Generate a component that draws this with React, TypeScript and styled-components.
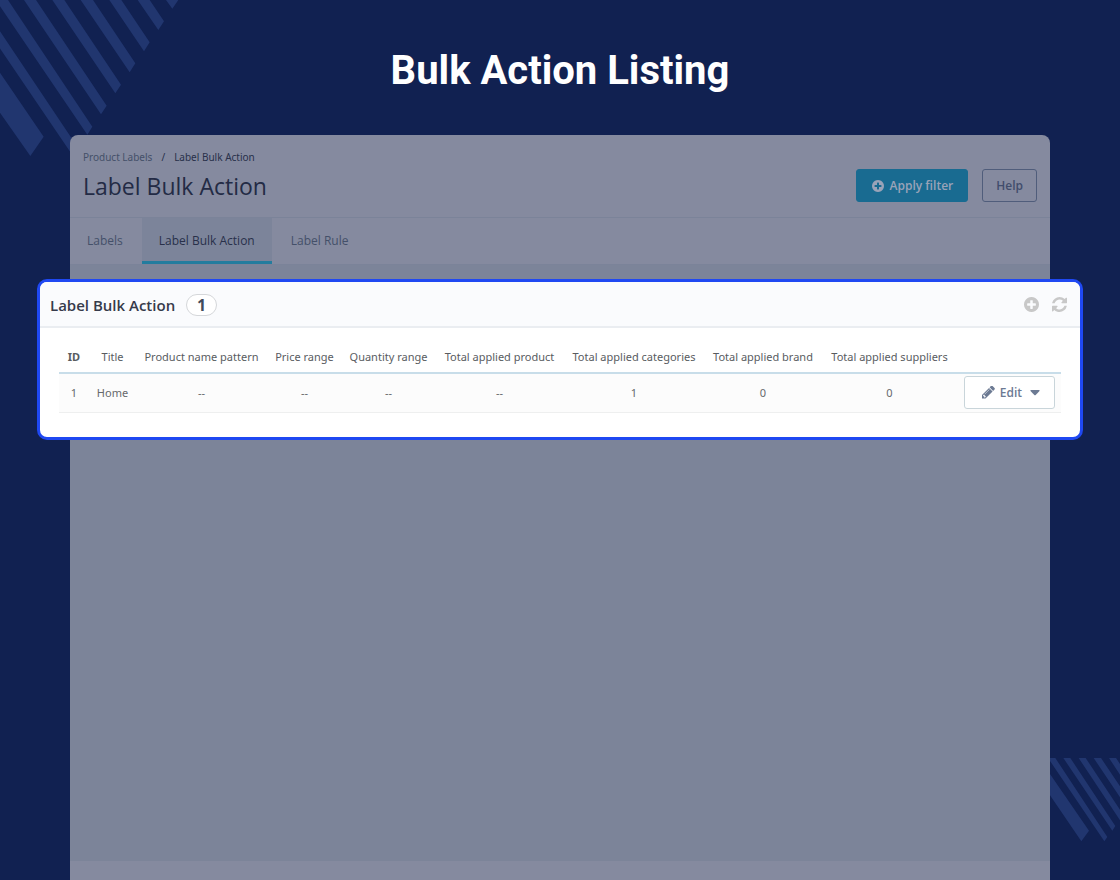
import React from "react";
import styled, { createGlobalStyle } from "styled-components";

const GlobalStyle = createGlobalStyle`
  *, *::before, *::after { box-sizing: border-box; }
  body {
    margin: 0;
    background: #112151;
    font-family: "Open Sans", "Noto Sans", sans-serif;
  }
  button { font-family: inherit; cursor: pointer; }
`;

const Page = styled.main`
  position: relative;
  display: flex;
  flex-direction: column;
  min-height: 100vh;
  padding: 47px 70px 0;
  overflow: hidden;
  background: #112151;
`;

const Stripes = styled.svg<{ $corner: "top" | "bottom" }>`
  position: absolute;
  fill: #21366f;
  ${({ $corner }) => ($corner === "top" ? "top: 0; left: 0;" : "right: 0; bottom: 38px;")}
`;

const PageTitle = styled.h1`
  position: relative;
  margin: 0 0 40px;
  color: #fff;
  font: 700 40px/48px Roboto, sans-serif;
  text-align: center;
`;

const AppWindow = styled.div`
  position: relative;
  display: flex;
  flex: 1;
  flex-direction: column;
  border-radius: 8px 8px 0 0;
  background: #858a9f;
`;

const Header = styled.header`
  display: flex;
  align-items: flex-end;
  justify-content: space-between;
  height: 83px;
  padding: 0 13px 15px;
  border-bottom: 1px solid #7b8399;
`;

const Breadcrumb = styled.nav`
  display: flex;
  gap: 9px;
  margin-bottom: 5px;
  color: #28304a;
  font-family: "Noto Sans", sans-serif;
  font-size: 10px;
  line-height: 16px;
`;

const CrumbLink = styled.a`
  color: #445069;
  text-decoration: none;
`;

const Heading = styled.h2`
  margin: 0;
  color: #232b45;
  font-size: 23px;
  font-weight: 400;
  line-height: 32px;
`;

const Actions = styled.div`
  display: flex;
  gap: 14px;
`;

const ActionButton = styled.button<{ $primary?: boolean }>`
  display: flex;
  align-items: center;
  gap: 6px;
  height: 33px;
  padding: ${({ $primary }) => ($primary ? "0 14px 0 15px" : "0 13px")};
  border: 1px solid ${({ $primary }) => ($primary ? "#196b91" : "#505d7b")};
  border-radius: 3px;
  background: ${({ $primary }) => ($primary ? "#196b91" : "transparent")};
  color: ${({ $primary }) => ($primary ? "#9aa3b8" : "#414d6c")};
  font-size: 12px;
  font-weight: 600;
`;

const Tabs = styled.nav`
  display: flex;
  height: 47px;
  border-bottom: 1px solid #7b8399;
`;

const Tab = styled.a<{ $active?: boolean }>`
  padding: 0 17px;
  border-bottom: 3px solid ${({ $active }) => ($active ? "#237c9e" : "transparent")};
  background: ${({ $active }) => ($active ? "#7c849a" : "transparent")};
  color: ${({ $active }) => ($active ? "#28304a" : "#445069")};
  font-size: 12px;
  line-height: 45px;
  text-decoration: none;

  & + & { margin-left: 2px; }
`;

const Content = styled.div`
  flex: 1;
  margin-bottom: 19px;
  padding-top: 14px;
  background: #7c8499;
`;

const Panel = styled.section`
  margin: 0 -33px;
  border: 3px solid #1f48f2;
  border-radius: 10px;
  background: #fff;
  overflow: hidden;
`;

const PanelHeader = styled.div`
  display: flex;
  align-items: center;
  justify-content: space-between;
  height: 46px;
  padding: 2px 13px 0 10px;
  border-bottom: 2px solid #eaedf1;
  background: #fafbfd;
`;

const PanelTitle = styled.h3`
  display: flex;
  align-items: center;
  gap: 11px;
  margin: 0;
  color: #363a4a;
  font-size: 15px;
  font-weight: 600;
`;

const Count = styled.span`
  width: 31px;
  border: 1px solid #d5d7da;
  border-radius: 11px;
  background: #fff;
  color: #414a5c;
  font-size: 16px;
  font-weight: 700;
  line-height: 20px;
  text-align: center;
`;

const Tools = styled.div`
  display: flex;
  gap: 13px;
  padding-bottom: 2px;
`;

const IconButton = styled.button`
  display: flex;
  padding: 0;
  border: 0;
  background: none;
  color: #c8c8c8;
`;

const TableArea = styled.div`
  padding: 12px 19px 24px;
`;

const Table = styled.table`
  width: 100%;
  border-collapse: collapse;
  table-layout: fixed;
  color: #66696c;
  font-family: "Noto Sans", sans-serif;
  font-size: 11px;
  text-align: center;
`;

const Col = styled.col<{ $width: number }>`
  width: ${({ $width }) => $width}px;
`;

const Th = styled.th<{ $strong?: boolean }>`
  height: 33px;
  padding: 0;
  border-bottom: 2px solid #c8dde9;
  color: #595c5f;
  font-weight: ${({ $strong }) => ($strong ? 700 : 400)};
  white-space: nowrap;
`;

const Td = styled.td`
  height: 39px;
  padding: 0;
  border-bottom: 1px solid #eeefef;
  background: #fcfcfc;
`;

const EditButton = styled.button`
  display: flex;
  align-items: center;
  justify-content: center;
  gap: 5px;
  width: 91px;
  height: 33px;
  margin: 0 auto;
  padding: 0 0 0 4px;
  border: 1px solid #c9d5da;
  border-radius: 3px;
  background: #fff;
  color: #6c7a93;
  font-family: "Open Sans", sans-serif;
  font-size: 12px;
  font-weight: 600;
`;

const Caret = styled.svg`
  margin-left: 3px;
`;

const PlusCircle = ({ size }: { size: number }) => (
  <svg width={size} height={size} viewBox="128 128 1536 1536" fill="currentColor" aria-hidden="true">
    <path d="M1344 960v-128q0-26-19-45t-45-19h-256v-256q0-26-19-45t-45-19h-128q-26 0-45 19t-19 45v256h-256q-26 0-45 19t-19 45v128q0 26 19 45t45 19h256v256q0 26 19 45t45 19h128q26 0 45-19t19-45v-256h256q26 0 45-19t19-45zm320-64q0 209-103 385.5t-279.5 279.5-385.5 103-385.5-103-279.5-279.5-103-385.5 103-385.5 279.5-279.5 385.5-103 385.5 103 279.5 279.5 103 385.5z" />
  </svg>
);

const Refresh = () => (
  <svg width="15" height="15" viewBox="0 0 1536 1536" fill="currentColor" aria-hidden="true">
    <path d="M1511 928q0 5-1 7-64 268-268 434.500t-478 166.500q-146 0-282.500-55t-243.500-157l-129 129q-19 19-45 19t-45-19-19-45v-448q0-26 19-45t45-19h448q26 0 45 19t19 45-19 45l-137 137q71 66 161 102t187 36q134 0 250-65t186-179q11-17 53-117 8-23 30-23h192q13 0 22.500 9.500t9.500 22.500zm25-800v448q0 26-19 45t-45 19h-448q-26 0-45-19t-19-45 19-45l138-138q-148-137-349-137-134 0-250 65t-186 179q-11 17-53 117-8 23-30 23h-199q-13 0-22.500-9.500t-9.500-22.500v-7q65-268 270-434.500t480-166.500q146 0 284 55.500t245 156.500l130-129q19-19 45-19t45 19 19 45z" />
  </svg>
);

const Pencil = () => (
  <svg width="13" height="13" viewBox="128 256 1536 1408" fill="currentColor" aria-hidden="true">
    <path d="M491 1536l91-91-235-235-91 91v107h128v128h107zm523-928q0-22-22-22-10 0-17 7l-542 542q-7 7-7 17 0 22 22 22 10 0 17-7l542-542q7-7 7-17zm-54-192l416 416-832 832h-416v-416zm683 96q0 53-37 90l-166 166-416-416 166-165q36-38 90-38 53 0 91 38l235 234q37 39 37 91z" />
  </svg>
);

const columns = [
  { label: "ID", width: 30 },
  { label: "Title", width: 47 },
  { label: "Product name pattern", width: 131 },
  { label: "Price range", width: 75 },
  { label: "Quantity range", width: 93 },
  { label: "Total applied product", width: 129 },
  { label: "Total applied categories", width: 140 },
  { label: "Total applied brand", width: 118 },
  { label: "Total applied suppliers", width: 135 },
  { label: "", width: 104 },
];

const rows = [["1", "Home", "--", "--", "--", "--", "1", "0", "0"]];

export default function App() {
  return (
    <Page>
      <GlobalStyle />
      <Stripes $corner="top" width="180" height="160" viewBox="0 0 540 480" aria-hidden="true">
        <path d="M0 218L131 410 91 468 0 338zM-99 0H-63L234 443 219 468zM-13 0H24L277 380 262 404zM72 0H108L320 317 303 343zM157 0H193L363 254 346 280zM242 0H279L406 190 389 217zM328 0H364L449 127 432 154zM413 0H449L492 64 475 90zM498 0H535L517 26z" />
      </Stripes>
      <Stripes $corner="bottom" width="70" height="84" viewBox="0 0 210 252" aria-hidden="true">
        <path d="M0 48L117 218 94 250 0 112zM-6 0H16L172 237 163 250zM40 0H61L196 204 187 218zM86 0H107L210 155V187zM131 0H153L210 85V118zM177 0H198L210 18V50z" />
      </Stripes>
      <PageTitle>Bulk Action Listing</PageTitle>
      <AppWindow>
        <Header>
          <div>
            <Breadcrumb aria-label="Breadcrumb">
              <CrumbLink href="#labels">Product Labels</CrumbLink>
              <span>/</span>
              <span>Label Bulk Action</span>
            </Breadcrumb>
            <Heading>Label Bulk Action</Heading>
          </div>
          <Actions>
            <ActionButton type="button" $primary>
              <PlusCircle size={12} />
              Apply filter
            </ActionButton>
            <ActionButton type="button">Help</ActionButton>
          </Actions>
        </Header>
        <Tabs aria-label="Sections">
          <Tab href="#labels">Labels</Tab>
          <Tab href="#bulk" $active aria-current="page">Label Bulk Action</Tab>
          <Tab href="#rule">Label Rule</Tab>
        </Tabs>
        <Content>
          <Panel>
            <PanelHeader>
              <PanelTitle>
                Label Bulk Action <Count>1</Count>
              </PanelTitle>
              <Tools>
                <IconButton type="button" aria-label="Add"><PlusCircle size={15} /></IconButton>
                <IconButton type="button" aria-label="Refresh"><Refresh /></IconButton>
              </Tools>
            </PanelHeader>
            <TableArea>
              <Table>
                <colgroup>
                  {columns.map((c) => <Col key={c.label} $width={c.width} />)}
                </colgroup>
                <thead>
                  <tr>
                    {columns.map((c, i) => <Th key={c.label} scope="col" $strong={i === 0}>{c.label}</Th>)}
                  </tr>
                </thead>
                <tbody>
                  {rows.map((row) => (
                    <tr key={row[0]}>
                      {row.map((cell, i) => <Td key={i}>{cell}</Td>)}
                      <Td>
                        <EditButton type="button">
                          <Pencil />
                          Edit
                          <Caret width="10" height="6" viewBox="0 0 10 6" fill="currentColor" aria-hidden="true">
                            <path d="M1 0h8q1 0 .5 1L5.700 5q-.7.700-1.400 0L.5 1Q0 0 1 0z" />
                          </Caret>
                        </EditButton>
                      </Td>
                    </tr>
                  ))}
                </tbody>
              </Table>
            </TableArea>
          </Panel>
        </Content>
      </AppWindow>
    </Page>
  );
}
